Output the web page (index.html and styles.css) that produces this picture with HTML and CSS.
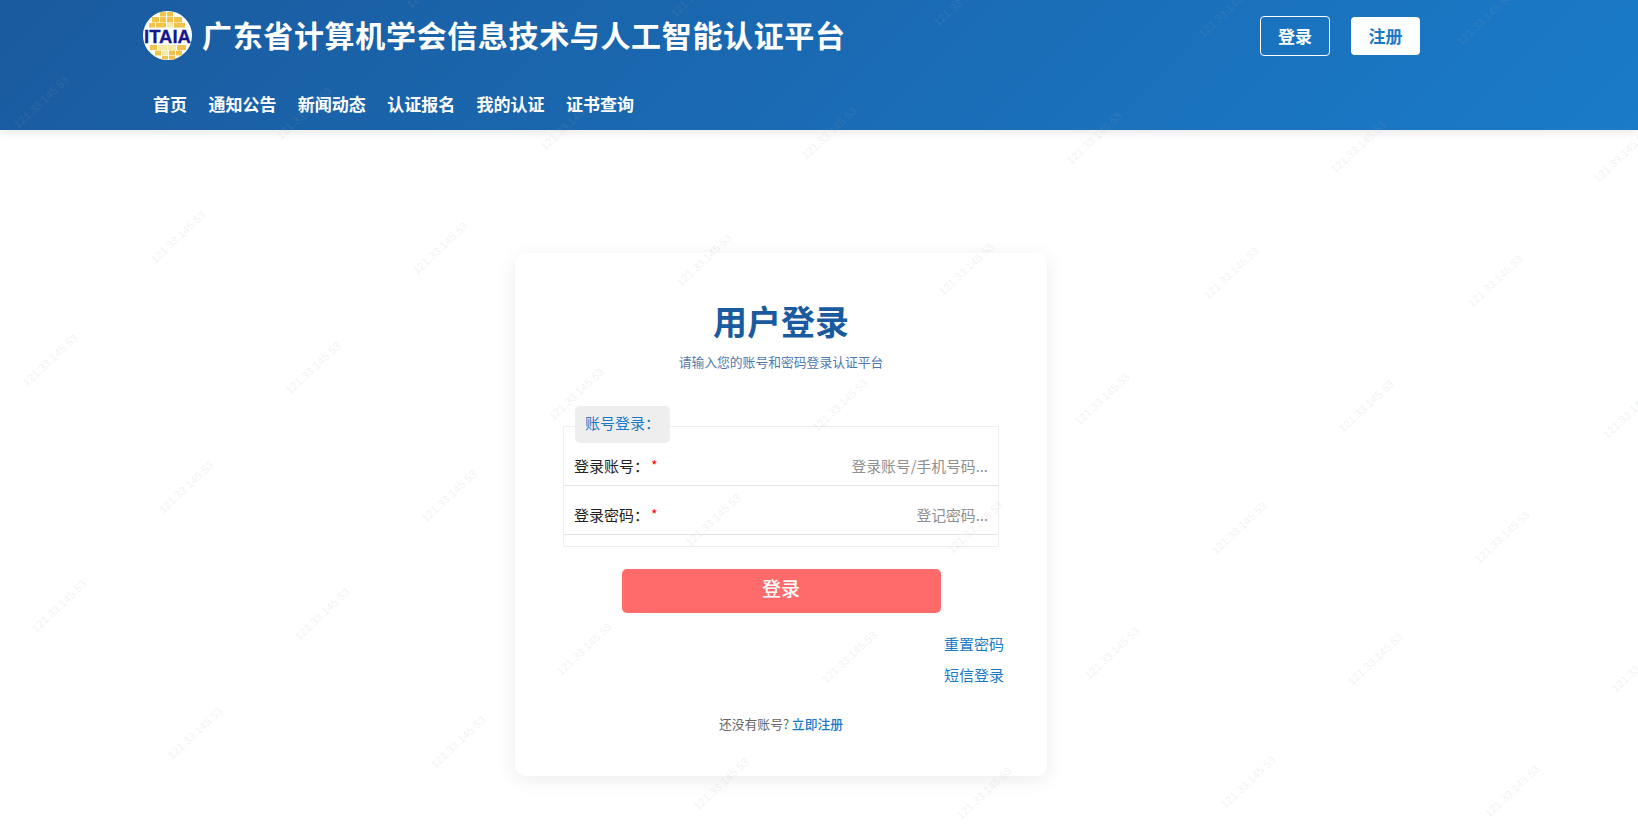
FILE: index.html
```html
<!DOCTYPE html>
<html lang="zh-CN">
<head>
<meta charset="utf-8">
<title>用户登录</title>
<link rel="stylesheet" href="styles.css">
</head>
<body>
<header class="site-header">
  <div class="wrap">
    <div class="top-row">
      <div class="brand">
        <svg class="logo" viewBox="0 0 49 51" aria-hidden="true">
          <circle cx="24.500" cy="25.500" r="24.500" fill="#fff"/>
          <g fill="#f0c34a">
            <rect x="17" y="2" width="6" height="4.500"/><rect x="24" y="2" width="6" height="4.500"/>
            <rect x="9" y="7" width="7" height="5.500"/><rect x="17" y="7" width="6" height="5.500"/><rect x="24" y="7" width="6" height="5.500"/><rect x="31" y="7" width="8" height="5.500"/>
            <rect x="6" y="13" width="6" height="4.500"/><rect x="13" y="13" width="10" height="4.500"/><rect x="31" y="13" width="11" height="4.500"/>
            <rect x="7" y="35" width="7" height="5"/><rect x="34" y="35" width="9" height="5"/>
            <rect x="12" y="40.500" width="6" height="5"/><rect x="26" y="40.500" width="6" height="5"/><rect x="33" y="40.500" width="6" height="5"/>
            <rect x="19" y="46" width="6" height="3.500"/><rect x="26" y="46" width="6" height="3.500"/>
          </g>
          <g fill="#f6eaa4">
            <rect x="24" y="13" width="6" height="4.500"/>
            <rect x="15" y="35" width="9" height="5"/><rect x="25" y="35" width="8" height="5"/>
            <rect x="19" y="40.500" width="6" height="5"/>
          </g>
          <text class="logo-text" x="24.500" y="32.500" textLength="47" lengthAdjust="spacingAndGlyphs">ITAIA</text>
        </svg>
        <h1 class="site-title">广东省计算机学会信息技术与人工智能认证平台</h1>
      </div>
      <div class="auth-btns">
        <a class="btn btn-outline">登录</a>
        <a class="btn btn-solid">注册</a>
      </div>
    </div>
    <nav class="main-nav">
      <a>首页</a><a>通知公告</a><a>新闻动态</a><a>认证报名</a><a>我的认证</a><a>证书查询</a>
    </nav>
  </div>
</header>

<main class="wrap page-main">
  <section class="card">
    <h2 class="card-title">用户登录</h2>
    <p class="card-sub">请输入您的账号和密码登录认证平台</p>
    <div class="login-box">
      <div class="box-legend">账号登录：</div>
      <div class="form-row">
        <span class="label">登录账号：</span><span class="star">*</span>
        <span class="placeholder">登录账号/手机号码...</span>
      </div>
      <div class="form-row">
        <span class="label">登录密码：</span><span class="star">*</span>
        <span class="placeholder">登记密码...</span>
      </div>
    </div>
    <button class="submit" type="button">登录</button>
    <div class="side-links">
      <a>重置密码</a>
      <a>短信登录</a>
    </div>
    <p class="register-tip">还没有账号? <a>立即注册</a></p>
  </section>
</main>

<svg class="watermarks" viewBox="0 0 1638 839" aria-hidden="true">
  <text x="434" y="-18" transform="rotate(-43 434 -18)">121.33.145.53</text>
  <text x="698" y="-9" transform="rotate(-43 698 -9)">121.33.145.53</text>
  <text x="961" y="0" transform="rotate(-43 961 0)">121.33.145.53</text>
  <text x="1226" y="11" transform="rotate(-43 1226 11)">121.33.145.53</text>
  <text x="1484" y="19" transform="rotate(-43 1484 19)">121.33.145.53</text>

  <text x="41" y="102" transform="rotate(-43 41 102)">121.33.145.53</text>
  <text x="304" y="113" transform="rotate(-43 304 113)">121.33.145.53</text>
  <text x="568" y="124" transform="rotate(-43 568 124)">121.33.145.53</text>
  <text x="829" y="133" transform="rotate(-43 829 133)">121.33.145.53</text>
  <text x="1094" y="138" transform="rotate(-43 1094 138)">121.33.145.53</text>
  <text x="1358" y="147" transform="rotate(-43 1358 147)">121.33.145.53</text>
  <text x="1621" y="156" transform="rotate(-43 1621 156)">121.33.145.53</text>

  <text x="178" y="237" transform="rotate(-43 178 237)">121.33.145.53</text>
  <text x="440" y="248" transform="rotate(-43 440 248)">121.33.145.53</text>
  <text x="704" y="260" transform="rotate(-43 704 260)">121.33.145.53</text>
  <text x="966" y="269" transform="rotate(-43 966 269)">121.33.145.53</text>
  <text x="1231" y="273" transform="rotate(-43 1231 273)">121.33.145.53</text>
  <text x="1495" y="281" transform="rotate(-43 1495 281)">121.33.145.53</text>

  <text x="50" y="360" transform="rotate(-43 50 360)">121.33.145.53</text>
  <text x="313" y="368" transform="rotate(-43 313 368)">121.33.145.53</text>
  <text x="576" y="394" transform="rotate(-43 576 394)">121.33.145.53</text>
  <text x="840" y="405" transform="rotate(-43 840 405)">121.33.145.53</text>
  <text x="1102" y="399" transform="rotate(-43 1102 399)">121.33.145.53</text>
  <text x="1366" y="406" transform="rotate(-43 1366 406)">121.33.145.53</text>
  <text x="1630" y="412" transform="rotate(-43 1630 412)">121.33.145.53</text>

  <text x="186" y="487" transform="rotate(-43 186 487)">121.33.145.53</text>
  <text x="449" y="496" transform="rotate(-43 449 496)">121.33.145.53</text>
  <text x="713" y="520" transform="rotate(-43 713 520)">121.33.145.53</text>
  <text x="975" y="527" transform="rotate(-43 975 527)">121.33.145.53</text>
  <text x="1239" y="528" transform="rotate(-43 1239 528)">121.33.145.53</text>
  <text x="1502" y="537" transform="rotate(-43 1502 537)">121.33.145.53</text>

  <text x="59" y="606" transform="rotate(-43 59 606)">121.33.145.53</text>
  <text x="322" y="614" transform="rotate(-43 322 614)">121.33.145.53</text>
  <text x="584" y="649" transform="rotate(-43 584 649)">121.33.145.53</text>
  <text x="849" y="657" transform="rotate(-43 849 657)">121.33.145.53</text>
  <text x="1112" y="653" transform="rotate(-43 1112 653)">121.33.145.53</text>
  <text x="1375" y="659" transform="rotate(-43 1375 659)">121.33.145.53</text>
  <text x="1639" y="666" transform="rotate(-43 1639 666)">121.33.145.53</text>

  <text x="195" y="733" transform="rotate(-43 195 733)">121.33.145.53</text>
  <text x="458" y="742" transform="rotate(-43 458 742)">121.33.145.53</text>
  <text x="721" y="784" transform="rotate(-43 721 784)">121.33.145.53</text>
  <text x="984" y="793" transform="rotate(-43 984 793)">121.33.145.53</text>
  <text x="1248" y="782" transform="rotate(-43 1248 782)">121.33.145.53</text>
  <text x="1512" y="791" transform="rotate(-43 1512 791)">121.33.145.53</text>
</svg>
</body>
</html>
```

FILE: styles.css
```css
* { box-sizing: border-box; }

html, body {
  margin: 0;
  height: 100%;
  overflow: hidden;
  background: #fff;
  font-family: "Noto Sans CJK SC", "Noto Sans", sans-serif;
}

.wrap {
  width: 1277px;
  margin-left: 143px;
}

/* Header */
.site-header {
  height: 130px;
  background: linear-gradient(135deg, #1a5a9e, #1a7bc9);
  box-shadow: 0 2px 10px rgba(0, 0, 0, 0.1);
  color: #fff;
}

.top-row {
  display: flex;
  justify-content: space-between;
  align-items: center;
  padding-top: 10px;
}

.brand {
  display: flex;
  align-items: center;
  gap: 10px;
}

.logo {
  width: 49px;
  height: 51px;
  display: block;
  flex: none;
  overflow: visible;
}

.logo-text {
  font-family: "Liberation Sans", sans-serif;
  font-weight: 700;
  font-size: 19px;
  fill: #17188a;
  stroke: #17188a;
  stroke-width: 0.3px;
  text-anchor: middle;
}

.site-title {
  margin: 0;
  padding-bottom: 4px;
  font-size: 30px;
  line-height: 40px;
  font-weight: 700;
  letter-spacing: 0.65px;
  white-space: nowrap;
}

.auth-btns {
  display: flex;
  align-items: center;
  gap: 21px;
  margin-top: 1px;
}

.btn {
  display: flex;
  align-items: center;
  justify-content: center;
  border-radius: 4px;
  font-size: 17px;
  font-weight: 700;
}

.btn-outline {
  width: 70px;
  height: 40px;
  padding-bottom: 1px;
  border: 1px solid #fff;
  color: #fff;
}

.btn-solid {
  width: 69px;
  height: 38px;
  padding-bottom: 1px;
  background: #fff;
  color: #1a7ac6;
  font-weight: 600;
}

.main-nav {
  display: flex;
  gap: 21.4px;
  padding: 31px 0 14px 10px;
  line-height: 24px;
  font-size: 17px;
  font-weight: 700;
  white-space: nowrap;
}

/* Card */
.page-main {
  width: 1276px;
  padding-top: 123px;
}

.card {
  width: 532px;
  height: 523px;
  margin: 0 auto;
  padding-top: 48px;
  background: #fff;
  border-radius: 10px;
  box-shadow: 0 4px 20px rgba(0, 0, 0, 0.08);
  display: flex;
  flex-direction: column;
  align-items: center;
}

.card-title {
  margin: 0 0 11px;
  font-size: 34px;
  line-height: 40px;
  font-weight: 700;
  color: #1a5a9e;
}

.card-sub {
  margin: 0 0 54px;
  font-size: 12.800px;
  line-height: 20px;
  color: #4f79ad;
}

.login-box {
  position: relative;
  width: 436px;
  height: 121px;
  padding: 10px 0 11px;
  border: 1px solid #eeeeee;
  flex: none;
}

.box-legend {
  position: absolute;
  left: 11px;
  top: -21px;
  height: 37px;
  padding: 0 10px;
  border-radius: 5px;
  background: #eeeeee;
  color: #1a7ac6;
  font-size: 15px;
  line-height: 34px;
}

.form-row {
  display: flex;
  align-items: center;
  height: 49px;
  padding: 18px 10px 8px;
  border-bottom: 1px solid #e4e4e4;
  font-size: 15px;
  line-height: 22px;
  color: #222;
}

.star {
  margin-left: 2px;
  margin-top: -3px;
  color: #f00;
  font-size: 14px;
}

.placeholder {
  margin-left: auto;
  color: #8f8f8f;
  font-size: 14.800px;
}

.submit {
  width: 319px;
  height: 44px;
  margin-top: 22px;
  flex: none;
  border: 0;
  border-radius: 5px;
  background: #ff6b6b;
  color: #fff;
  font-family: inherit;
  font-size: 19px;
  font-weight: 500;
  padding: 0 0 7px;
}

.side-links {
  align-self: flex-end;
  margin: 20px 43px 0 0;
  display: flex;
  flex-direction: column;
  gap: 9px;
  font-size: 15px;
  line-height: 22px;
  color: #1a7ac6;
}

.register-tip {
  margin: 28px 0 0;
  font-size: 12.800px;
  line-height: 20px;
  color: #666;
}

.register-tip a {
  color: #1a7ac6;
  font-weight: 500;
}

/* Watermark layer */
.watermarks {
  position: absolute;
  left: 0;
  top: 0;
  width: 1638px;
  height: 839px;
  pointer-events: none;
}

.watermarks text {
  font-family: "Liberation Sans", sans-serif;
  font-size: 11px;
  text-anchor: middle;
  dominant-baseline: central;
  fill: rgba(170, 170, 170, 0.17);
}
```
